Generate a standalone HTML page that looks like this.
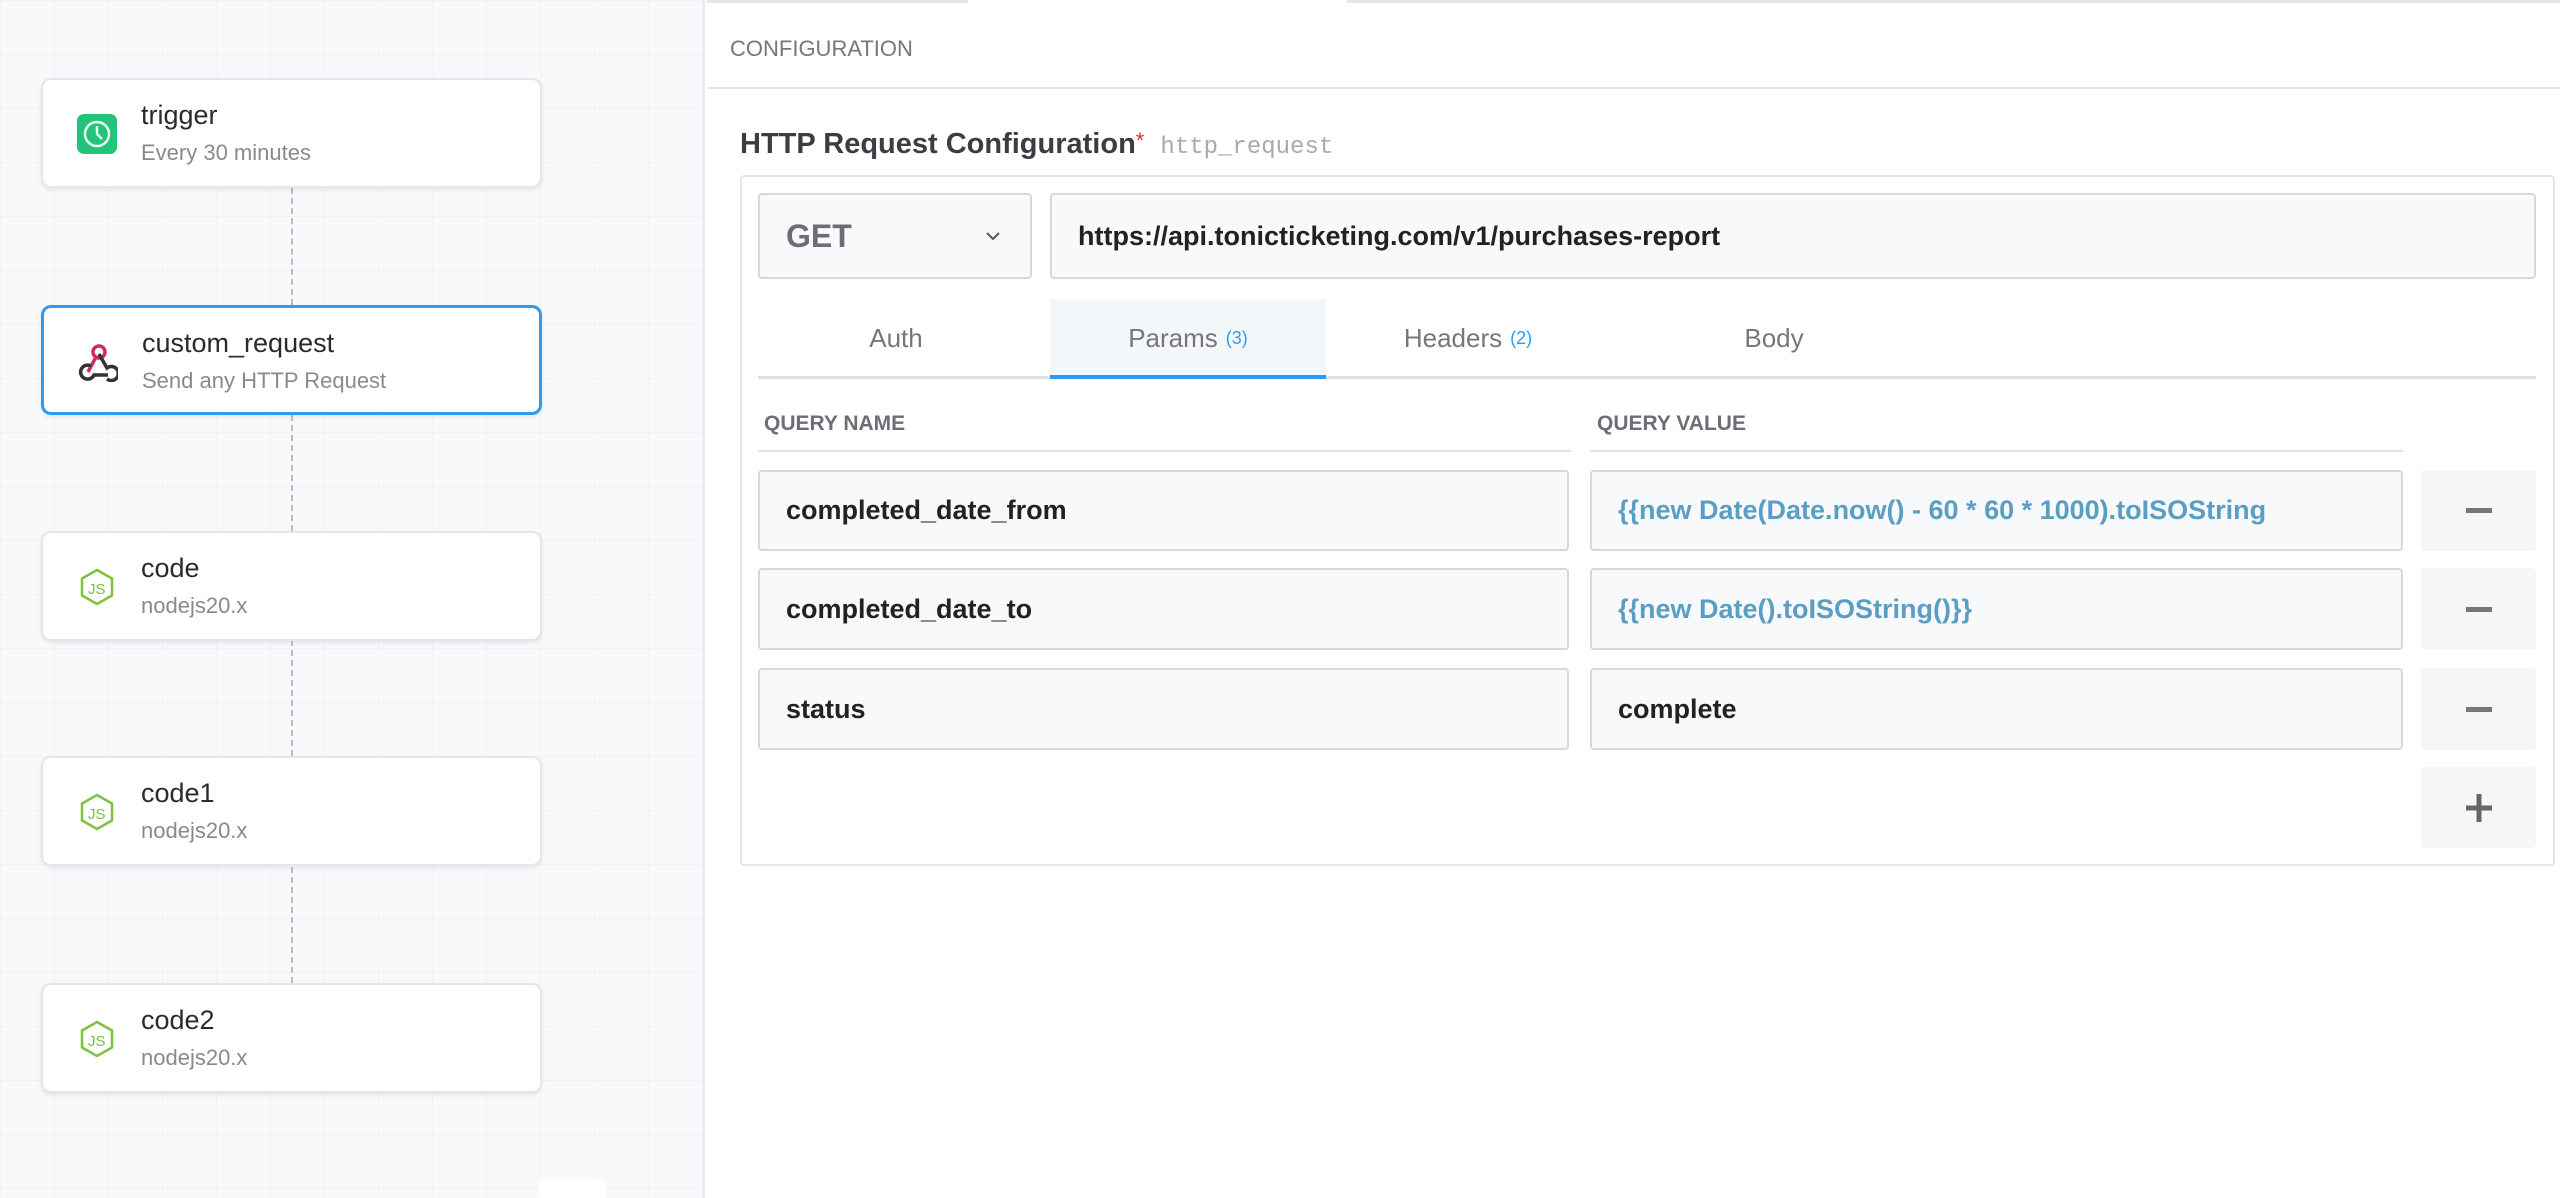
<!DOCTYPE html>
<html><head><meta charset="utf-8"><style>
*{box-sizing:border-box;margin:0;padding:0}
body{width:2560px;height:1198px;overflow:hidden;font-family:"Liberation Sans","DejaVu Sans",sans-serif;background:#fff;position:relative}
.left{position:absolute;left:0;top:0;width:705px;height:1198px;background-color:#f8f9fa;background-image:linear-gradient(#f1f2f4 1px,transparent 1px),linear-gradient(90deg,#f1f2f4 1px,transparent 1px);background-size:54px 54px;border-right:2px solid #e6e8eb}
.vline{position:absolute;left:291px;width:0;border-left:2px dashed #b8bdc4}
.node{position:absolute;left:41px;width:501px;height:110px;background:#fff;border:2px solid #e4e6e9;border-radius:10px;box-shadow:0 2px 4px rgba(0,0,0,.08)}
.node.sel{border:3px solid #2d9cf0}
.node .ic{position:absolute;left:34px;top:34px;width:40px;height:40px}
.node .t{position:absolute;left:98px;top:20px;font-size:27px;color:#2b2b2b}
.node .s{position:absolute;left:98px;top:60px;font-size:22px;color:#8a8a8a}
.abs{position:absolute}
.inp{position:absolute;background:#f8f9fb;border:2px solid #d5d9df;border-radius:4px;font-size:27px;font-weight:bold;color:#222;padding-left:26px;display:flex;align-items:center;white-space:nowrap;overflow:hidden}
.btn{position:absolute;left:2421px;width:115px;background:#f5f6f8;border-radius:4px;display:flex;align-items:center;justify-content:center}
.lab{position:absolute;font-size:21px;font-weight:bold;color:#6b6f75;top:412px}
.tab{position:absolute;top:299px;height:78px;font-size:26px;color:#777;display:flex;align-items:center;justify-content:center}
.tab b{font-weight:normal;color:#2d9cf0;font-size:18px;margin-left:8px}
</style></head><body>
<div class="left">
<div class="vline" style="top:188px;height:117px"></div>
<div class="vline" style="top:415px;height:116px"></div>
<div class="vline" style="top:640px;height:116px"></div>
<div class="vline" style="top:867px;height:116px"></div>
<div class="node" style="top:78px"><svg class="ic" viewBox="0 0 40 40"><rect width="40" height="40" rx="7" fill="#22c47a"/><circle cx="20" cy="20" r="12" fill="none" stroke="#e8fff3" stroke-width="2.5"/><path d="M20 12v8l5 5" fill="none" stroke="#e8fff3" stroke-width="2.5"/></svg><div class="t">trigger</div><div class="s">Every 30 minutes</div></div>
<div class="node sel" style="top:305px"><svg class="ic" viewBox="0 0 40 40"><circle cx="21" cy="10" r="6" fill="none" stroke="#d42a5a" stroke-width="3.5"/><path d="M18 15l-8 15" fill="none" stroke="#d42a5a" stroke-width="3.5"/><path d="M13 24a7 7 0 1 0 3 9h14" fill="none" stroke="#333" stroke-width="3.5"/><path d="M21 12l8 14a7 7 0 1 1 0 11" fill="none" stroke="#333" stroke-width="3.5"/></svg><div class="t">custom_request</div><div class="s">Send any HTTP Request</div></div>
<div class="node" style="top:531px"><svg class="ic" viewBox="0 0 40 40"><path d="M20 3l15 8.5v17L20 37 5 28.5v-17z" fill="none" stroke="#7cc23c" stroke-width="2.5"/><text x="11" y="27" font-size="15" fill="#7cc23c" font-family="Liberation Sans">JS</text></svg><div class="t">code</div><div class="s">nodejs20.x</div></div>
<div class="node" style="top:756px"><svg class="ic" viewBox="0 0 40 40"><path d="M20 3l15 8.5v17L20 37 5 28.5v-17z" fill="none" stroke="#7cc23c" stroke-width="2.5"/><text x="11" y="27" font-size="15" fill="#7cc23c" font-family="Liberation Sans">JS</text></svg><div class="t">code1</div><div class="s">nodejs20.x</div></div>
<div class="node" style="top:983px"><svg class="ic" viewBox="0 0 40 40"><path d="M20 3l15 8.5v17L20 37 5 28.5v-17z" fill="none" stroke="#7cc23c" stroke-width="2.5"/><text x="11" y="27" font-size="15" fill="#7cc23c" font-family="Liberation Sans">JS</text></svg><div class="t">code2</div><div class="s">nodejs20.x</div></div>
<div class="abs" style="left:539px;top:1179px;width:67px;height:19px;background:#fff"></div>
</div>
<div class="abs" style="left:707px;top:0;width:261px;height:3px;background:#e4e6e9"></div>
<div class="abs" style="left:1347px;top:0;width:1213px;height:3px;background:#e4e6e9"></div>
<div class="abs" style="left:730px;top:36px;font-size:22px;color:#777">CONFIGURATION</div>
<div class="abs" style="left:707px;top:87px;width:1853px;height:2px;background:#e4e6e9"></div>
<div class="abs" style="left:740px;top:128px;font-size:29px;font-weight:bold;color:#3a3d42">HTTP Request Configuration<span style="color:#e0303a;font-weight:normal;font-size:22px;vertical-align:top">*</span> <span style="font-family:'Liberation Mono',monospace;font-weight:normal;font-size:24px;color:#a5abb3;margin-left:8px">http_request</span></div>
<div class="abs" style="left:740px;top:175px;width:1815px;height:691px;border:2px solid #e4e6e9;border-radius:4px"></div>
<div class="inp" style="left:758px;top:193px;width:274px;height:86px;color:#6b6f75;font-size:32px">GET<svg style="position:absolute;left:225px;top:36px" width="16" height="12" viewBox="0 0 16 12"><path d="M2 2l6 6 6-6" fill="none" stroke="#555" stroke-width="2"/></svg></div>
<div class="inp" style="left:1050px;top:193px;width:1486px;height:86px">https://api.tonicticketing.com/v1/purchases-report</div>
<div class="abs" style="left:758px;top:376px;width:1778px;height:3px;background:#dde1e6"></div>
<div class="abs" style="left:1050px;top:299px;width:276px;height:77px;background:#f4f7fa"></div>
<div class="abs" style="left:1050px;top:375px;width:276px;height:4px;background:#2d9cf0"></div>
<div class="tab" style="left:758px;width:276px">Auth</div>
<div class="tab" style="left:1050px;width:276px">Params<b>(3)</b></div>
<div class="tab" style="left:1330px;width:276px">Headers<b>(2)</b></div>
<div class="tab" style="left:1636px;width:276px">Body</div>
<div class="lab" style="left:764px">QUERY NAME</div>
<div class="lab" style="left:1597px">QUERY VALUE</div>
<div class="abs" style="left:758px;top:450px;width:813px;height:2px;background:#dde1e6"></div>
<div class="abs" style="left:1590px;top:450px;width:813px;height:2px;background:#dde1e6"></div>
<div class="inp" style="left:758px;top:470px;width:811px;height:81px">completed_date_from</div>
<div class="inp" style="left:1590px;top:470px;width:813px;height:81px;color:#5a9ec3">{{new Date(Date.now() - 60 * 60 * 1000).toISOString</div>
<div class="btn" style="top:470px;height:81px"><div style="width:26px;height:5px;background:#777"></div></div>
<div class="inp" style="left:758px;top:568px;width:811px;height:82px">completed_date_to</div>
<div class="inp" style="left:1590px;top:568px;width:813px;height:82px;color:#5a9ec3">{{new Date().toISOString()}}</div>
<div class="btn" style="top:568px;height:82px"><div style="width:26px;height:5px;background:#777"></div></div>
<div class="inp" style="left:758px;top:668px;width:811px;height:82px">status</div>
<div class="inp" style="left:1590px;top:668px;width:813px;height:82px">complete</div>
<div class="btn" style="top:668px;height:82px"><div style="width:26px;height:5px;background:#777"></div></div>
<div class="btn" style="top:767px;height:81px"><svg width="28" height="30" viewBox="0 0 28 30"><path d="M14 1v28M1 15h26" stroke="#666" stroke-width="5"/></svg></div>
</body></html>
